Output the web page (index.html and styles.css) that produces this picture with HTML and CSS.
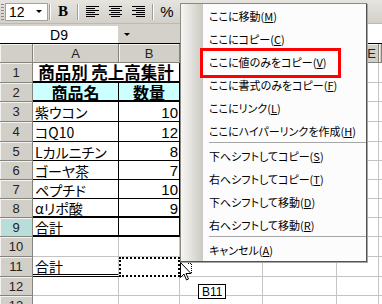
FILE: index.html
```html
<!DOCTYPE html>
<html lang="ja">
<head>
  <meta charset="UTF-8">
  <title>商品別 売上高集計</title>
  <link rel="stylesheet" href="styles.css">
</head>
<body>
  <div class="toolbar">
    <span class="grip"></span>
    <div class="fontsize"><span>12</span><span class="drop"></span></div>
    <span class="sep first"></span>
    <span class="tool bold">B</span>
    <span class="sep"></span>
    <span class="tool">
      <svg width="13" height="11" viewBox="0 0 13 11"><path d="M0 .5h13M0 2.5h9M0 4.5h13M0 6.5h9M0 8.5h13M0 10.5h9" stroke="#000"/></svg>
    </span>
    <span class="tool">
      <svg width="13" height="11" viewBox="0 0 13 11"><path d="M0 .5h13M2 2.5h9M0 4.5h13M2 6.5h9M0 8.5h13M2 10.5h9" stroke="#000"/></svg>
    </span>
    <span class="tool">
      <svg width="13" height="11" viewBox="0 0 13 11"><path d="M0 .5h13M4 2.5h9M0 4.5h13M4 6.5h9M0 8.5h13M4 10.5h9" stroke="#000"/></svg>
    </span>
    <span class="sep"></span>
    <span class="tool pct">%</span>
  </div>

  <div class="namebar">
    <div class="namebox">D9</div>
    <div class="namedrop"><span class="drop"></span></div>
    <div class="formula"></div>
  </div>

  <div class="sheet">
    <div class="corner"></div><div class="ch">A</div><div class="ch">B</div><div class="ch">C</div><div class="ch">D</div><div class="ch right">E</div><div class="ch"></div>

    <div class="rh">1</div><div class="c title">商品別 売上高集計</div><div class="c"></div><div class="c"></div><div class="c"></div><div class="c"></div>
    <div class="rh">2</div><div class="c t tb head">商品名</div><div class="c t tb head">数量</div><div class="c"></div><div class="c"></div><div class="c"></div><div class="c"></div>
    <div class="rh">3</div><div class="c t">紫ウコン</div><div class="c t num">10</div><div class="c"></div><div class="c"></div><div class="c"></div><div class="c"></div>
    <div class="rh">4</div><div class="c t">コQ10</div><div class="c t num">12</div><div class="c"></div><div class="c"></div><div class="c"></div><div class="c"></div>
    <div class="rh">5</div><div class="c t">Lカルニチン</div><div class="c t num">8</div><div class="c"></div><div class="c"></div><div class="c"></div><div class="c"></div>
    <div class="rh">6</div><div class="c t">ゴーヤ茶</div><div class="c t num">7</div><div class="c"></div><div class="c"></div><div class="c"></div><div class="c"></div>
    <div class="rh">7</div><div class="c t">ペプチド</div><div class="c t num">10</div><div class="c"></div><div class="c"></div><div class="c"></div><div class="c"></div>
    <div class="rh">8</div><div class="c t tb">αリポ酸</div><div class="c t tb num">9</div><div class="c"></div><div class="c"></div><div class="c"></div><div class="c"></div>
    <div class="rh sel">9</div><div class="c t tb">合計</div><div class="c t tb"></div><div class="c"></div><div class="c"></div><div class="c"></div><div class="c"></div>
    <div class="rh">10</div><div class="c"></div><div class="c"></div><div class="c"></div><div class="c"></div><div class="c"></div><div class="c"></div>
    <div class="rh">11</div><div class="c dbl">合計</div><div class="c ants"></div><div class="c"></div><div class="c"></div><div class="c"></div><div class="c"></div>
    <div class="rh">12</div><div class="c"></div><div class="c"></div><div class="c"></div><div class="c"></div><div class="c"></div><div class="c"></div>
    <div class="rh">13</div><div class="c"></div><div class="c"></div><div class="c"></div><div class="c"></div><div class="c"></div><div class="c"></div>
  </div>

  <div class="menu">
    <div class="item">ここに移動(<u>M</u>)</div>
    <div class="item">ここにコピー(<u>C</u>)</div>
    <div class="item marked">ここに値のみをコピー(<u>V</u>)</div>
    <div class="item">ここに書式のみをコピー(<u>F</u>)</div>
    <div class="item">ここにリンク(<u>L</u>)</div>
    <div class="item">ここにハイパーリンクを作成(<u>H</u>)</div>
    <div class="divider"></div>
    <div class="item">下へシフトしてコピー(<u>S</u>)</div>
    <div class="item">右へシフトしてコピー(<u>T</u>)</div>
    <div class="item">下へシフトして移動(<u>D</u>)</div>
    <div class="item">右へシフトして移動(<u>R</u>)</div>
    <div class="divider"></div>
    <div class="item">キャンセル(<u>A</u>)</div>
  </div>

  <svg class="cursor" width="13" height="20" viewBox="0 0 13 20">
    <path d="M.5.5v15l3.5-3.5 2.5 6 2-1-2.5-5.5h5z" fill="#fff" stroke="#000"/>
    <path d="M8 1.5h3.5v10" fill="none" stroke="#000" stroke-dasharray="1 1"/>
  </svg>
  <div class="tip">B11</div>
</body>
</html>
```

FILE: styles.css
```css
* {
  box-sizing: border-box;
}
body {
  margin: 0;
  width: 382px;
  height: 304px;
  overflow: hidden;
  position: relative;
  background: #fff;
  font-family: "Noto Sans CJK JP", sans-serif;
  font-feature-settings: "palt";
  color: #000;
}

/* toolbar */
.toolbar {
  height: 24px;
  display: flex;
  align-items: center;
  padding-left: 1px;
  background: linear-gradient(#e6e4df, #d3d0c9);
  border-bottom: 1px solid #bdbab3;
}
.grip {
  width: 3px;
  height: 16px;
  margin-right: 1px;
  background: repeating-linear-gradient(#8a8780 0 1px, transparent 1px 3px);
}
.fontsize {
  width: 43px;
  height: 18px;
  display: flex;
  align-items: center;
  justify-content: space-between;
  padding: 0 5px 0 3px;
  background: #fff;
  border: 1px solid #a5a29b;
  font: 14px "Liberation Sans", sans-serif;
}
.drop {
  width: 0;
  height: 0;
  border-left: 3px solid transparent;
  border-right: 3px solid transparent;
  border-top: 3px solid #000;
}
.sep {
  width: 2px;
  height: 16px;
  margin: 0 3px 0 4px;
  border-left: 1px solid #a09d96;
  border-right: 1px solid #fff;
}
.sep.first {
  margin: 0 2px 0 1px;
}
.tool {
  width: 20px;
  height: 20px;
  display: flex;
  align-items: center;
  justify-content: center;
}
.tool + .tool {
  margin-left: 3px;
}
.bold {
  font: bold 15px "Liberation Serif", serif;
}
.pct {
  font: 15px "Liberation Sans", sans-serif;
}

/* name box */
.namebar {
  height: 20px;
  display: flex;
  align-items: flex-end;
  background: #d4d1ca;
  border-bottom: 1px solid #000;
}
.namebox {
  width: 118px;
  height: 17px;
  display: flex;
  align-items: center;
  justify-content: center;
  background: #fff;
  font: 14px "Liberation Sans", sans-serif;
}
.namedrop {
  width: 62px;
  height: 17px;
  display: flex;
  align-items: center;
  padding-left: 6px;
}
.formula {
  flex: 1;
  height: 19px;
  background: #fff;
}

/* sheet */
.sheet {
  display: grid;
  grid-template-columns: 33px 86px 61px 83px 74px 42px 3px;
  grid-template-rows: 19px 20px 19px 20px 20px 19px 19px 19px 19px 19px 20px 20px 19px 19px;
}
.corner, .ch, .rh {
  display: flex;
  align-items: center;
  justify-content: center;
  overflow: hidden;
  background: #d2cfc8;
  border-right: 1px solid #85837e;
  border-bottom: 1px solid #85837e;
  box-shadow: inset 1px 1px #f4f3f0;
  font: 13px "Liberation Sans", sans-serif;
  color: #222;
}
.ch.right {
  justify-content: flex-end;
  padding-right: 2px;
}
.rh.sel {
  background: #b9ddd8;
}
.c {
  display: flex;
  align-items: center;
  padding: 1px 2px 0;
  border-right: 1px solid #c4c4c4;
  border-bottom: 1px solid #c4c4c4;
  font-size: 14px;
  line-height: 1;
  white-space: nowrap;
}
.c.t {
  border-color: #000;
}
.c.tb {
  border-bottom: 2px solid #000;
}
.title {
  grid-column: span 2;
  justify-content: center;
  padding: 0;
  font-size: 16.5px;
  font-weight: bold;
  border-right-color: #000;
  border-bottom: 2px solid #000;
}
.head {
  justify-content: center;
  padding-top: 0;
  background: #ccffff;
  font-size: 16px;
  font-weight: bold;
}
.num {
  justify-content: flex-end;
  padding-right: 1px;
  font: 15px "Liberation Sans", sans-serif;
}
.dbl {
  border-bottom: 3px double #000;
}
.ants {
  border: 2px dotted #000;
}

/* context menu */
.menu {
  position: absolute;
  left: 180px;
  top: 3px;
  width: 187px;
  height: 259px;
  background: linear-gradient(to right, #f6f6f4 0, #cbc9c2 22px, #fcfcfc 22px);
  border: 1px solid #8d8b86;
  border-right-color: #55534f;
  border-bottom-color: #55534f;
  box-shadow: 1px 1px 0 #a8a6a1;
  font-size: 11px;
}
.item {
  position: relative;
  height: 23px;
  display: flex;
  align-items: center;
  padding-left: 28px;
  white-space: nowrap;
}
.item u {
  text-underline-offset: 1px;
}
.marked::after {
  content: "";
  position: absolute;
  left: 19px;
  top: -2px;
  width: 135px;
  height: 24px;
  border: 3px solid #f00;
}
.divider {
  height: 2px;
  margin-left: 28px;
  border-top: 1px solid #a6a6a6;
}

/* pointer and tip */
.cursor {
  position: absolute;
  left: 180px;
  top: 262px;
}
.tip {
  position: absolute;
  left: 198px;
  top: 284px;
  padding: 0 3px;
  height: 15px;
  line-height: 13px;
  background: #fff;
  border: 1px solid #000;
  font: 12px "Liberation Sans", sans-serif;
}
```
